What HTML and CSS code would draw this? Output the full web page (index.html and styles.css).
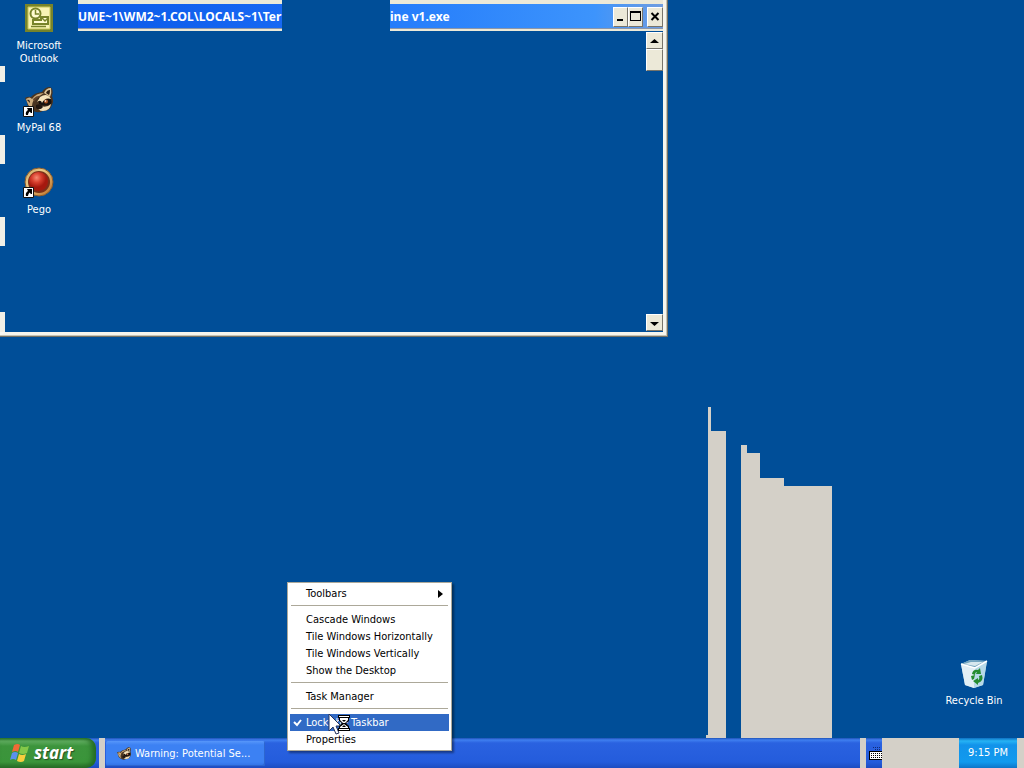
FILE: index.html
```html
<!DOCTYPE html>
<html lang="en">
<head>
<meta charset="utf-8">
<title>Desktop</title>
<link rel="stylesheet" href="styles.css">
</head>
<body>
<main class="desktop">
  <section class="window" aria-label="Console window">
    <header class="titlebar">
      <h1 class="title title-start"><span class="title-text">UME~1\WM2~1.COL\LOCALS~1\Ter</span></h1>
      <div class="title title-end">
        <span class="title-text">ine v1.exe</span>
        <div class="controls">
          <button class="control" type="button" aria-label="Minimize"><svg width="15" height="20" shape-rendering="crispEdges"><path d="M4 12h6v2H4z"/></svg></button>
          <button class="control" type="button" aria-label="Maximize"><svg width="15" height="20" shape-rendering="crispEdges"><path fill-rule="evenodd" d="M2 4h11v10H2zM3 6v7h9V6z"/></svg></button>
          <button class="control close" type="button" aria-label="Close"><svg width="16" height="20"><path d="M4.500 6l7 7M11.500 6l-7 7" stroke="#000" stroke-width="2"/></svg></button>
        </div>
      </div>
    </header>
    <div class="client">
      <div class="scrollbar">
        <button class="scroll-button" type="button" aria-label="Scroll up"><svg width="17" height="16"><path d="M4 10l4.500-4 4.500 4z"/></svg></button>
        <div class="thumb"></div>
        <button class="scroll-button scroll-down" type="button" aria-label="Scroll down"><svg width="17" height="16"><path d="M4 7h9l-4.500 4z"/></svg></button>
      </div>
    </div>
  </section>

  <nav class="icons" aria-label="Desktop shortcuts">
    <div class="cell"><button class="shortcut" type="button">
      <svg width="32" height="30" viewBox="0 0 32 30"><path d="M2 1h28v28H2z" fill="#77832a"/><path d="M5 4h22v22H5z" fill="#f7f3b4"/><path d="M5 4h22v22H5z" fill="none" stroke="#c6c65b"/><circle cx="12.500" cy="10.500" r="5" fill="#fffbd2" stroke="#77832a" stroke-width="2"/><path d="M12.500 7v4H16" fill="none" stroke="#77832a" stroke-width="1.500"/><path d="M18 14h7v7H10v-4h8z" fill="#fffbd2" stroke="#77832a" stroke-width="2"/><path d="M19 15l3 3 3-3M8 23.500h15" fill="none" stroke="#77832a" stroke-width="1.500"/></svg>
      <span class="label">Microsoft<br>Outlook</span></button></div>
    <div class="cell"><button class="shortcut" type="button">
      <svg width="32" height="32" viewBox="0 0 32 32"><g id="raccoon"><path d="M2 13q3-2 6-1 3-4 11-5 3-5 8-5 4 2 2 9 2 5 0 9-2 6-9 6-6 3-11-1-5-3-5-8z" fill="#493421"/><path d="M21 8q2-5 7-5 1 5-1 9z" fill="#dcc498"/><path d="M23 8q1-3 4-3 0 3-1 5z" fill="#281b13"/><path d="M3 14q4-3 6 0 4-6 12-6l-6 4q-6 3-6 9l2 4q-5-2-7-8z" fill="#cbab7c"/><path d="M4 15q3-1 3 3z" fill="#38271b"/><path d="M10 14q4-4 8-3-5 2-7 6z" fill="#62452c"/><path d="M15 14q4-5 9-3 6 3 4 8-6 3-12 0z" fill="#18120f"/><path d="M17 12q7-5 11 2-6-2-9 4-1-4-5-1z" fill="#f6e4bd"/><path d="M15 20q8 4 13-1-1 7-8 7-6 0-5-6z" fill="#f1dfba"/><path d="M13 20q5-2 7 2-3 4-7 1z" fill="#211610"/><circle cx="23" cy="16.500" r="2" fill="#a95422"/><circle cx="22.500" cy="16" r=".8" fill="#fff"/></g><g id="link"><path d="M.5 21.500h10v10H.5z" fill="#fff" stroke="#111"/><path d="M4 23h5v5H8l-1.500-1.500Q5 28 5 30H3q-1-3 2-5z"/></g></svg>
      <span class="label">MyPal 68</span></button></div>
    <div class="cell"><button class="shortcut" type="button">
      <svg width="32" height="32" viewBox="0 0 32 32"><defs><radialGradient id="red" cx=".4" cy=".3"><stop offset="0" stop-color="#f68a72"/><stop offset=".5" stop-color="#d8402f"/><stop offset="1" stop-color="#a5190f"/></radialGradient><linearGradient id="gold" x2="1" y2="1"><stop stop-color="#c49c5c"/><stop offset=".35" stop-color="#edca86"/><stop offset="1" stop-color="#b86a22"/></linearGradient></defs><circle cx="16" cy="15" r="14" fill="url(#gold)" stroke="#8b5c2c"/><circle cx="16" cy="15" r="11" fill="#7b3019"/><circle cx="15.500" cy="14.500" r="9.500" fill="url(#red)"/><use href="#link" y="-1"/></svg>
      <span class="label">Pego</span></button></div>
    <div class="cell"><div class="blank"></div></div>
  </nav>

  <button class="shortcut recycle" type="button">
    <svg width="32" height="32" viewBox="0 0 32 32"><path d="M3 6l9-4 17 1-4 24-9 3-9-3z" fill="#b9d9e8"/><path d="M3 6l14 4-1 20-9-3z" fill="#e2eff5"/><path d="M17 10l12-7-4 24-9 3z" fill="#b7d9e8"/><path d="M3 6l9-4 17 1-12 7z" fill="#72a4bf"/><path d="M6 6l7-2h12l-8 4z" fill="#d7e8ee"/><path d="M3 6l14 4 12-7" fill="none" stroke="#fff" stroke-width="1.500"/><path d="M14 16q1-5 6-4l2-2 1 6h-5l1-2q-2 0-2 3zM24 17q2 6-4 8v2l-5-4 5-3v2q2-1 1-4zM13 18l4-1-1 4-2 1z" fill="#258c30"/></svg>
    <span class="label">Recycle Bin</span>
  </button>

  <div class="trails" aria-hidden="true">
    <i class="trail t1"></i><i class="trail t2"></i><i class="trail t3"></i><i class="gap"></i><i class="trail t4"></i><i class="trail t5"></i><i class="trail t6"></i><i class="trail t7"></i>
  </div>
</main>

<footer class="taskbar">
  <button class="start" type="button">
    <svg width="20" height="20" viewBox="0 0 20 20"><path d="M4 2q4-2 6 0L8 9Q6 7 2 9z" fill="#ef6a36"/><path d="M11 3q3 2 8 0l-2 7q-4 2-8 0z" fill="#83c849"/><path d="M2 10q3-2 6 0l-2 7q-3-2-6 0z" fill="#5b91ee"/><path d="M9 11q3 2 7 0l-2 7q-3 2-7 0z" fill="#f8ce3d"/></svg>
    <span>start</span>
  </button>
  <span class="divider"></span>
  <div class="tasks"><button class="task" type="button"><svg width="16" height="16" viewBox="0 0 32 32"><use href="#raccoon"/></svg><span>Warning: Potential Se...</span></button></div>
  <span class="divider"></span>
  <button class="keyboard" type="button" aria-label="Keyboard"><svg width="13" height="16" shape-rendering="crispEdges"><path d="M4 2.500h8M6 4.500h6" fill="none" stroke="#102a78" stroke-dasharray="1 1"/><path d="M0 6h13v9H0z" fill="#000"/><path d="M1 7h12v7H1z" fill="#fff"/><path d="M2 8.500h11M2 10.500h11M2 12.500h11" stroke="#000" stroke-dasharray="1 1"/></svg></button>
  <span class="tray-blank"></span>
  <time class="clock">9:15 PM</time>
  <span class="divider"></span>
</footer>

<div class="menu" role="menu">
  <button class="item" type="button" role="menuitem">Toolbars<svg class="arrow" width="5" height="8"><path d="M0 0l5 4-5 4z"/></svg></button>
  <hr class="separator">
  <button class="item" type="button" role="menuitem">Cascade Windows</button>
  <button class="item" type="button" role="menuitem">Tile Windows Horizontally</button>
  <button class="item" type="button" role="menuitem">Tile Windows Vertically</button>
  <button class="item" type="button" role="menuitem">Show the Desktop</button>
  <hr class="separator">
  <button class="item" type="button" role="menuitem">Task Manager</button>
  <hr class="separator">
  <button class="item selected" type="button" role="menuitemcheckbox" aria-checked="true"><svg class="check" width="9" height="8"><path d="M1 3l3 3 4-5" fill="none" stroke="#fff" stroke-width="2"/></svg>Lock the Taskbar</button>
  <button class="item" type="button" role="menuitem">Properties</button>
</div>

<svg class="pointer" width="24" height="24" aria-hidden="true"><path d="M1 0v17l4-4 3 7 3-1-3-7h5z" fill="#fff" stroke="#26345c"/><path d="M10 1h12v3h-1v3l-3 2 3 3v2h1v3H10v-3h1v-2l3-3-3-2V4h-1z" fill="#000"/><path d="M11 2h10v1H11zM12 4h8v2l-3 3h-2l-3-3zM16 10l4 3v1h-8v-1zM11 15h10v1H11z" fill="#fff"/><path d="M14 6h4l-2 2zM16 11l2 2h-4z" fill="#000"/></svg>
</body>
</html>
```

FILE: styles.css
```css
* { box-sizing: border-box; }

body {
  display: flex;
  flex-direction: column;
  height: 100vh;
  margin: 0;
  overflow: hidden;
  background: #004e98;
  font: 11px/13px "DejaVu Sans Condensed", "DejaVu Sans", sans-serif;
}

button {
  margin: 0;
  padding: 0;
  border: 0;
  background: none;
  color: inherit;
  font: inherit;
}

svg { display: block; flex: none; }

.desktop { position: relative; flex: 1; }

/* Console window */
.window {
  position: absolute;
  top: 0;
  left: 0;
  display: flex;
  flex-direction: column;
  width: 668px;
  height: 337px;
  border: solid #ece9d8;
  border-width: 0 5px 5px;
  border-left-color: #f1efe6;
}

.window::after {
  content: "";
  position: absolute;
  inset: 0 -5px -5px;
  border: solid #716f64;
  border-width: 0 1px 1px 0;
  box-shadow: inset -1px -1px #c6c3b4, inset -4px -4px #fff8;
  pointer-events: none;
}

.titlebar { display: flex; height: 31px; margin: 0 -5px; }

.title {
  display: flex;
  align-items: center;
  margin: 0;
  border-top: 4px solid #ece9d8;
  border-bottom: 2px solid #ece9d8;
  box-shadow: inset 0 -1px #8c96a8;
  color: #fff;
  font: bold 12px/16px "Noto Sans", sans-serif;
  white-space: nowrap;
}

.title-start {
  width: 204px;
  margin-left: 78px;
  background: linear-gradient(90deg, #0b59e8, #1768f3);
}

.title-end {
  flex: 1;
  justify-content: space-between;
  margin-left: 108px;
  border-right: 5px solid #ece9d8;
  background: linear-gradient(90deg, #247cfb, #3d94fc 75%, #709de0);
}

.controls { display: flex; }

.control, .scroll-button, .thumb {
  border: 1px solid;
  border-color: #fff #77746a #77746a #fff;
  background: #ece9d8;
}

.control { width: 15px; height: 20px; }
.control svg { margin: -1px; }
.close { width: 16px; margin-left: 4px; }

.client { display: flex; flex: 1; justify-content: flex-end; padding: 1px 0; }
.scrollbar { display: flex; flex-direction: column; width: 17px; }
.scroll-button { width: 17px; height: 17px; }
.scroll-button svg { margin: -1px; }
.thumb { height: 22px; }
.scroll-down { margin-top: auto; }

/* Desktop shortcuts */
.icons { position: absolute; top: 0; left: 0; width: 78px; }
.cell { height: 82px; }

.shortcut {
  display: flex;
  flex-direction: column;
  align-items: center;
  gap: 4px;
  width: 78px;
  min-height: 53px;
  padding: 3px 0 0;
  background: #004e98;
  color: #fff;
}

.cell:first-child .shortcut { min-height: 66px; gap: 6px; }
.blank { height: 66px; background: #004e98; }
.label { white-space: nowrap; }
.recycle { position: absolute; right: 11px; bottom: 30px; }

/* Repaint trails */
.trails { position: absolute; bottom: 0; left: 706px; display: flex; align-items: flex-end; }
.trail { background: #d4d0c8; }
.t1 { width: 2px; height: 3px; }
.t2 { width: 3px; height: 331px; }
.t3 { width: 15px; height: 307px; }
.gap { width: 15px; }
.t4 { width: 6px; height: 293px; }
.t5 { width: 13px; height: 285px; }
.t6 { width: 24px; height: 260px; }
.t7 { width: 48px; height: 252px; }

/* Taskbar */
.taskbar {
  display: flex;
  height: 30px;
  background: linear-gradient(#1e52b7, #3f7ff0 2px, #2a62e0 5px, #245cdc 24px, #1d4cc0);
  color: #fff;
}

.start {
  display: flex;
  align-items: center;
  gap: 4px;
  width: 96px;
  margin-right: 3px;
  padding: 0 0 1px 10px;
  border-radius: 0 10px 10px 0;
  background: linear-gradient(#2c7a2c, #61ae61 3px, #3c943c 8px, #3a953a 24px, #276d27);
  box-shadow: inset -4px 0 5px #246b24;
  font: italic bold 17px/24px "Noto Sans", sans-serif;
  text-shadow: 1px 1px 1px #234f23;
}

.divider { width: 6px; background: #d4d0c8; }
.divider:last-child { width: 7px; }
.tasks { display: flex; flex: 1; padding: 3px 1px 2px; }

.task {
  display: flex;
  align-items: center;
  gap: 3px;
  width: 159px;
  padding-left: 10px;
  border-radius: 2px;
  background: linear-gradient(#5797fa, #3c81f3 4px, #3c81f3 21px, #3071e6);
  box-shadow: inset -1px -1px #2d66cf;
  white-space: nowrap;
}

.keyboard { display: flex; align-items: center; width: 16px; padding-left: 3px; overflow: hidden; }
.tray-blank { width: 77px; background: #d4d0c8; }

.clock {
  width: 58px;
  background: linear-gradient(#0d70c3, #26b3f4 3px, #1293ea 7px, #119aee 24px, #0d75c8);
  line-height: 30px;
  text-align: center;
}

/* Taskbar menu */
.menu {
  position: absolute;
  bottom: 17px;
  left: 287px;
  width: 165px;
  padding: 2px;
  border: 1px solid #aca899;
  background: #fff;
  box-shadow: 2px 2px 2px #0006;
}

.item {
  display: flex;
  align-items: center;
  width: 100%;
  height: 17px;
  padding: 0 6px 0 16px;
  white-space: nowrap;
}

.separator { height: 1px; margin: 3px 1px 5px; border: 0; background: #aca899; }
.arrow { margin-left: auto; }
.selected { padding-left: 3px; gap: 4px; background: #316ac5; color: #fff; }
.pointer { position: absolute; bottom: 30px; left: 328px; }
```
